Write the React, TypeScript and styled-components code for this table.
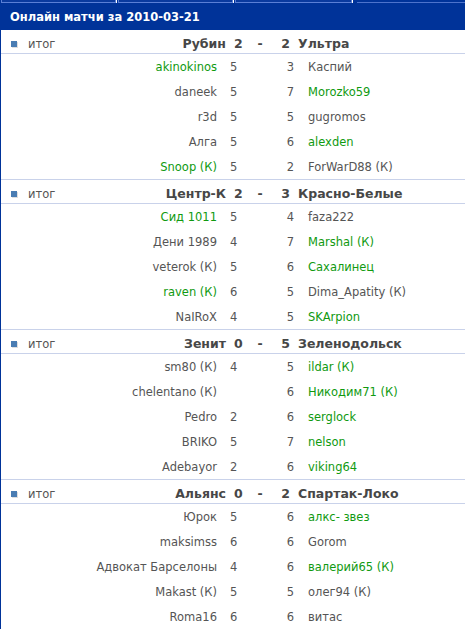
import React from 'react'
import styled, {createGlobalStyle} from 'styled-components'

const GlobalStyle = createGlobalStyle`
  html, body {
    margin: 0;
    padding: 0;
    background: #fff;
  }
  body {
    font-family: "DejaVu Sans", Verdana, sans-serif;
  }
`

const Page = styled.div`
  width: 465px;
  height: 629px;
  overflow: hidden;
  border-left: 1px solid #003399;
  box-sizing: border-box;
`

const TabStrip = styled.div`
  display: flex;
  height: 3px;
  background: #003399;
  overflow: hidden;
`

const Tab = styled.div<{$w: number}>`
  width: ${p => p.$w}px;
  height: 6px;
  margin-top: -3px;
  box-sizing: border-box;
  border: 1px solid #5a7fd6;
  background: #0a3a9e;
  margin-right: 2px;
  box-shadow: 1px 0 0 #fff;
`

const TabRest = styled.div`
  flex: 1;
  margin-left: 3px;
  border-top: 2px solid #003399;
  border-bottom: 1px solid #4d73cc;
  height: 0;
`

const TitleBar = styled.div`
  height: 27px;
  background: #003399;
  color: #fff;
  display: flex;
  align-items: center;
  padding-left: 9px;
  font-weight: bold;
  font-size: 11.5px;
`

const Section = styled.section<{$first?: boolean}>`
  border-top: ${p => (p.$first ? 'none' : '1px solid #c9d2ea')};
`

const HeadRow = styled.div`
  display: grid;
  grid-template-columns: 228px 20px 22px 23px 1fr;
  height: 24px;
  box-sizing: border-box;
  padding-top: 4px;
  align-items: center;
  border-bottom: 1px solid #c9d2ea;
  color: #474747;
`

const HeadLeft = styled.div`
  display: flex;
  align-items: center;
  padding-right: 3px;
`

const Bullet = styled.span`
  width: 6px;
  height: 6px;
  margin-left: 10px;
  background: #4a7db3;
  box-shadow: 1px 1px 0 #dedede;
`

const Result = styled.span`
  margin-left: 11px;
  font-size: 11.5px;
  color: #555;
`

const Team = styled.span<{$right?: boolean}>`
  font-size: 12.5px;
  font-weight: bold;
  ${p => (p.$right ? 'padding-left: 4px;' : 'margin-left: auto;')}
  white-space: nowrap;
`

const HeadScore = styled.span<{$right?: boolean}>`
  font-size: 12.5px;
  font-weight: bold;
  text-align: ${p => (p.$right ? 'right' : 'left')};
  ${p => (p.$right ? 'padding-right: 4px;' : 'padding-left: 5px;')}
`

const Dash = styled.span`
  font-size: 12.5px;
  font-weight: bold;
  text-align: center;
`

const PlayerRow = styled.div`
  display: grid;
  grid-template-columns: 220px 30px 43px 1fr;
  height: 25px;
  align-items: center;
  font-size: 11.5px;
  color: #555;
  white-space: nowrap;
`

const Name = styled.span<{$green?: boolean; $right?: boolean}>`
  color: ${p => (p.$green ? '#109a10' : '#555')};
  text-align: ${p => (p.$right ? 'left' : 'right')};
  ${p => (p.$right ? 'padding-left: 14px;' : 'padding-right: 4px;')}
`

const Score = styled.span<{$right?: boolean}>`
  text-align: ${p => (p.$right ? 'right' : 'left')};
  ${p => (p.$right ? '' : 'padding-left: 9px;')}
`

type Player = [string, boolean, string]
type Match = {
  home: string
  away: string
  hs: number
  as: number
  rows: [Player, Player][]
}

const matches: Match[] = [
  {
    home: 'Рубин',
    away: 'Ультра',
    hs: 2,
    as: 2,
    rows: [
      [['akinokinos', true, '5'], ['Каспий', false, '3']],
      [['daneek', false, '5'], ['Morozko59', true, '7']],
      [['r3d', false, '5'], ['gugromos', false, '5']],
      [['Алга', false, '5'], ['alexden', true, '6']],
      [['Snoop (К)', true, '5'], ['ForWarD88 (К)', false, '2']]
    ]
  },
  {
    home: 'Центр-К',
    away: 'Красно-Белые',
    hs: 2,
    as: 3,
    rows: [
      [['Сид 1011', true, '5'], ['faza222', false, '4']],
      [['Дени 1989', false, '4'], ['Marshal (К)', true, '7']],
      [['veterok (К)', false, '5'], ['Сахалинец', true, '6']],
      [['raven (К)', true, '6'], ['Dima_Apatity (К)', false, '5']],
      [['NaIRoX', false, '4'], ['SKArpion', true, '5']]
    ]
  },
  {
    home: 'Зенит',
    away: 'Зеленодольск',
    hs: 0,
    as: 5,
    rows: [
      [['sm80 (К)', false, '4'], ['ildar (К)', true, '5']],
      [['chelentano (К)', false, ''], ['Никодим71 (К)', true, '6']],
      [['Pedro', false, '2'], ['serglock', true, '6']],
      [['BRIKO', false, '5'], ['nelson', true, '7']],
      [['Adebayor', false, '2'], ['viking64', true, '6']]
    ]
  },
  {
    home: 'Альянс',
    away: 'Спартак-Локо',
    hs: 0,
    as: 2,
    rows: [
      [['Юрок', false, '5'], ['алкс- звез', true, '6']],
      [['maksimss', false, '6'], ['Gorom', false, '6']],
      [['Адвокат Барселоны', false, '4'], ['валерий65 (К)', true, '6']],
      [['Makast (К)', false, '5'], ['олег94 (К)', false, '5']],
      [['Roma16', false, '6'], ['витас', false, '6']]
    ]
  }
]

const App = () => {
  return (
    <>
      <GlobalStyle />
      <Page>
        <TabStrip>
          <Tab $w={115} />
          <Tab $w={115} />
          <Tab $w={117} />
          <TabRest />
        </TabStrip>
        <TitleBar>Онлайн матчи за 2010-03-21</TitleBar>
        {matches.map((m, i) => (
          <Section key={m.home} $first={i === 0}>
            <HeadRow>
              <HeadLeft>
                <Bullet />
                <Result>итог</Result>
                <Team>{m.home}</Team>
              </HeadLeft>
              <HeadScore>{m.hs}</HeadScore>
              <Dash>-</Dash>
              <HeadScore $right>{m.as}</HeadScore>
              <Team $right>{m.away}</Team>
            </HeadRow>
            {m.rows.map(([l, r], j) => (
              <PlayerRow key={j}>
                <Name $green={l[1]}>{l[0]}</Name>
                <Score>{l[2]}</Score>
                <Score $right>{r[2]}</Score>
                <Name $right $green={r[1]}>{r[0]}</Name>
              </PlayerRow>
            ))}
          </Section>
        ))}
      </Page>
    </>
  )
}

export default App
